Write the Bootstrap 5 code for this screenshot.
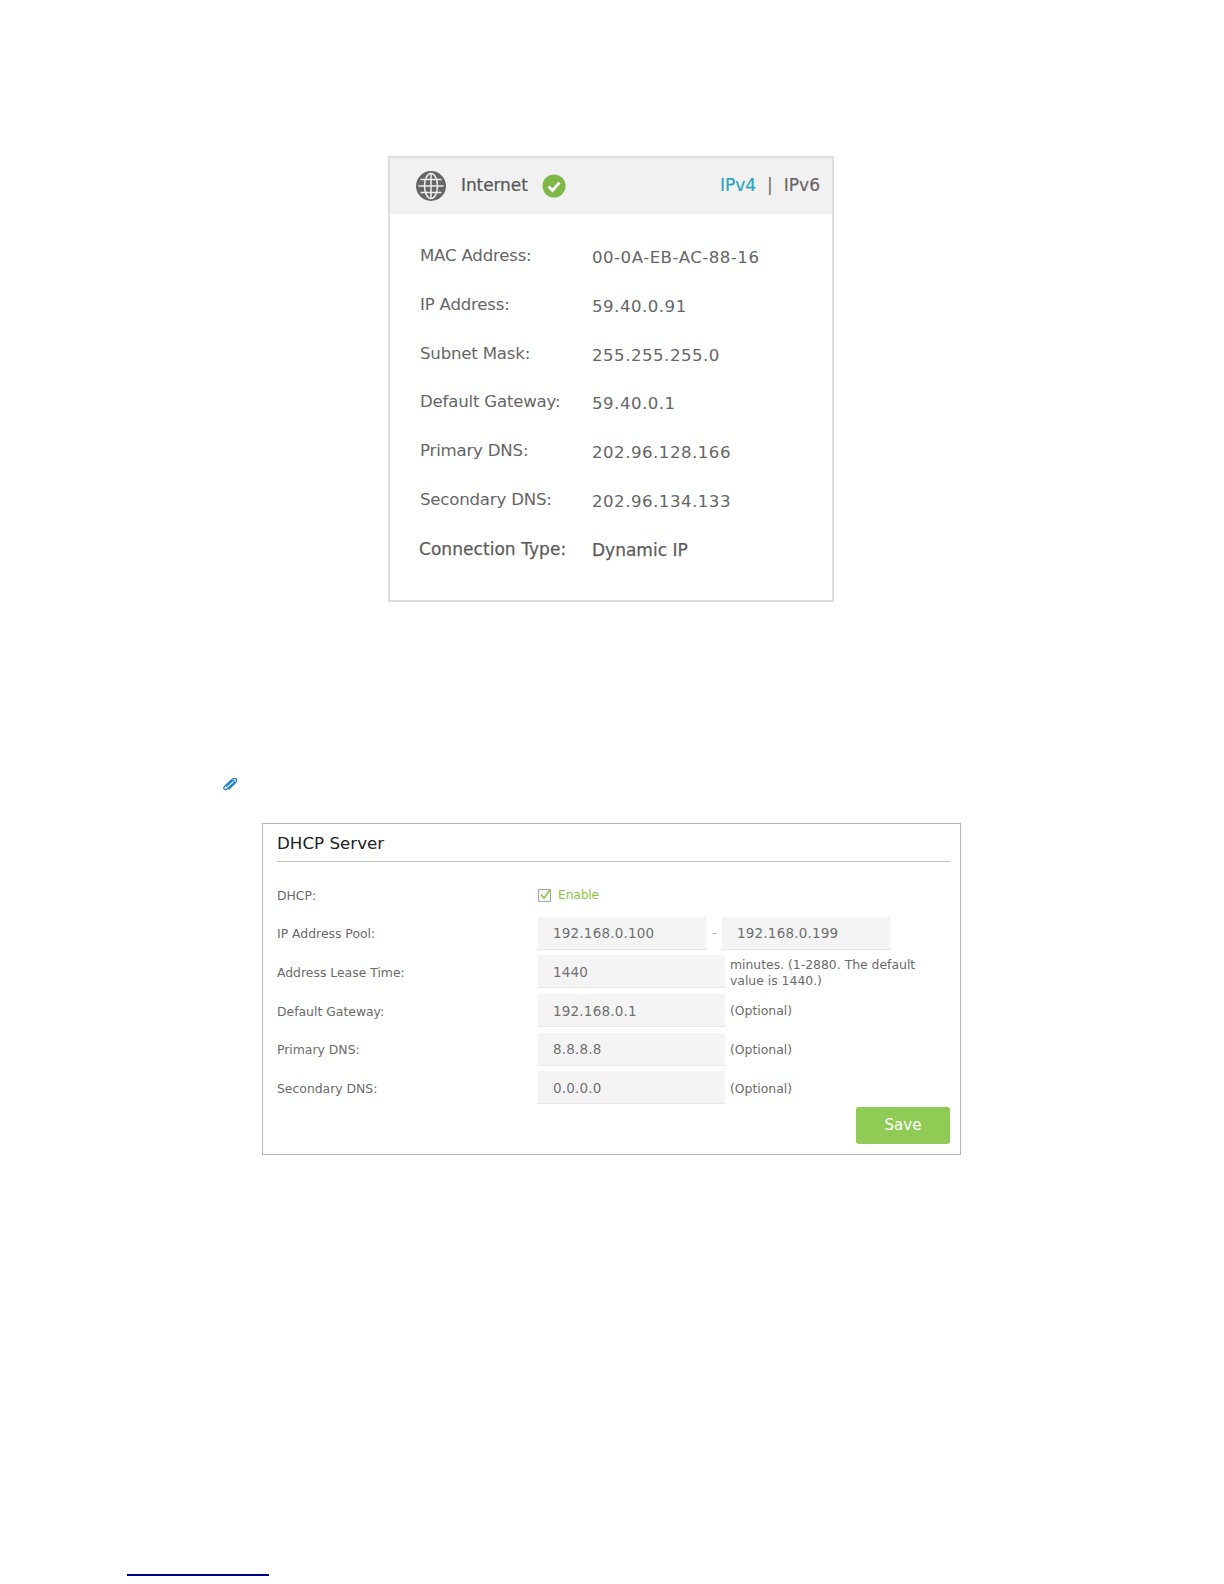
<!DOCTYPE html>
<html lang="en">
<head>
<meta charset="utf-8">
<title>Internet and DHCP Server</title>
<link rel="stylesheet" href="https://cdn.jsdelivr.net/npm/bootstrap@5.3.0/dist/css/bootstrap.min.css">
<style>
html,body{background:#fff}
body{font-family:"DejaVu Sans",sans-serif;color:#666;height:1584px;overflow:hidden;padding-top:156px}
.inet-card{width:446px;height:446px;margin-left:388px;border:2px solid #dcdcdc}
.inet-head{height:56px;background:#f1f1f1;padding:0 12px 0 25px;font-size:17px}
.inet-head .nm{margin-left:14px;margin-right:14px;color:#555;letter-spacing:-.1px;-webkit-text-stroke:.2px #555}
.inet-head .proto,.inet-head .lnk{-webkit-text-stroke:.2px currentColor}
.proto{color:#29a5c4}
.sep{margin:0 11px}
.inet-body{padding-top:20px;padding-left:30px;font-size:16.6px}
.inet-row{height:48.8px}
.inet-lab{width:172px;padding-bottom:4px;letter-spacing:-.2px}
.inet-val{letter-spacing:.5px}
.inet-strong{color:#5c5c5c;-webkit-text-stroke:.25px #5c5c5c;font-size:17px}
.inet-strong .inet-lab{padding-bottom:2px;letter-spacing:.05px;margin-left:-1px;width:173px}
.clip-row{margin-left:222px;margin-top:176px;height:14px;line-height:0}
.dhcp-card{width:699px;height:332px;margin-left:262px;margin-top:31px;border:1px solid #b5b5b5;padding:0 10px 0 14px}
.dhcp-title{height:38px;border-bottom:1px solid #c4c4c4;font-size:16.7px;color:#222;padding-top:8px;line-height:22px}
.dhcp-rows{font-size:12.4px;padding-top:13px}
.d-row{height:38.7px}
.d-lab{width:261px;color:#6a6a6a;padding-top:3px}
.fld{background:#f4f4f4;border-bottom:1px solid #e6e6e6;height:33px;padding:2px 0 0 15px;font-size:13.5px;letter-spacing:.2px;color:#707070}
.fld-s{width:169px}
.fld-l{width:187px}
.dash{width:15px;text-align:center;color:#aaa}
.hint{margin-left:5px;line-height:16px;color:#6a6a6a;width:200px;padding-top:2px}
.en{color:#8cc63f;margin-left:6px;letter-spacing:-.2px}
.chk{margin-top:2px}
.save-btn{width:94px;height:37px;background:#8fcb55;color:#fff;border:0;border-radius:3px;font-size:15px;padding:0;margin-right:0}
.save-btn:hover{background:#8fcb55;color:#fff}
.foot-rule{width:142px;height:1px;border-top:2px solid #00008b;margin-left:127px;margin-top:419px}
</style>
</head>
<body>
<section class="inet-card bg-white">
  <div class="inet-head d-flex align-items-center">
    <svg width="32" height="32" viewBox="0 0 32 32" aria-hidden="true"><circle cx="16" cy="16" r="15" fill="#666"/><g fill="none" stroke="#eee" stroke-width="1.5"><ellipse cx="16" cy="16" rx="6.5" ry="12.5"/><path d="M16 3v26M3.5 16h25M5.500 9.500h21M5.500 22.500h21"/></g></svg>
    <span class="nm">Internet</span>
    <svg width="24" height="24" viewBox="0 0 24 24" aria-hidden="true"><circle cx="12" cy="12" r="11.500" fill="#7fb848"/><path d="M6.500 12.500l4 4 7-8" fill="none" stroke="#fff" stroke-width="2.800"/></svg>
    <span class="ms-auto proto">IPv4</span><span class="sep">|</span><span class="lnk">IPv6</span>
  </div>
  <div class="inet-body">
    <div class="inet-row d-flex align-items-center"><span class="inet-lab">MAC Address:</span><span class="inet-val">00-0A-EB-AC-88-16</span></div>
    <div class="inet-row d-flex align-items-center"><span class="inet-lab">IP Address:</span><span class="inet-val">59.40.0.91</span></div>
    <div class="inet-row d-flex align-items-center"><span class="inet-lab">Subnet Mask:</span><span class="inet-val">255.255.255.0</span></div>
    <div class="inet-row d-flex align-items-center"><span class="inet-lab">Default Gateway:</span><span class="inet-val">59.40.0.1</span></div>
    <div class="inet-row d-flex align-items-center"><span class="inet-lab">Primary DNS:</span><span class="inet-val">202.96.128.166</span></div>
    <div class="inet-row d-flex align-items-center"><span class="inet-lab">Secondary DNS:</span><span class="inet-val">202.96.134.133</span></div>
    <div class="inet-row inet-strong d-flex align-items-center"><span class="inet-lab">Connection Type:</span><span>Dynamic IP</span></div>
  </div>
</section>
<div class="clip-row">
  <svg width="16" height="14" viewBox="0 0 16 14" aria-hidden="true"><path d="M4.500 8.500 10 3.300c.8-.7 1.700-.8 2.100-.3.4.5.200 1.300-.6 2.100L5.800 10.500c-1.300 1.200-2.800 1.500-3.600.7-.8-.8-.4-2.300.9-3.500L9.700 1.700c1.500-1.300 3.400-1.600 4.300-.7.900 1 .4 2.800-1.100 4.200L7 11" fill="none" stroke="#1a7cc4" stroke-width="1.200" stroke-linecap="round"/></svg>
</div>
<section class="dhcp-card bg-white">
  <div class="dhcp-title">DHCP Server</div>
  <div class="dhcp-rows">
    <div class="d-row d-flex align-items-center"><span class="d-lab">DHCP:</span>
      <svg class="chk" width="14" height="14" viewBox="0 0 14 14" aria-hidden="true"><rect x=".5" y="1.500" width="12" height="12" fill="#f4f4f4" stroke="#aaa"/><path d="M3 6.500l3 3.500 6.500-9" fill="none" stroke="#8cc63f" stroke-width="1.500"/></svg>
      <span class="en chk">Enable</span></div>
    <div class="d-row d-flex align-items-center"><span class="d-lab">IP Address Pool:</span><div class="fld fld-s d-flex align-items-center">192.168.0.100</div><span class="dash">-</span><div class="fld fld-s d-flex align-items-center">192.168.0.199</div></div>
    <div class="d-row d-flex align-items-center"><span class="d-lab">Address Lease Time:</span><div class="fld fld-l d-flex align-items-center">1440</div><span class="hint">minutes. (1-2880. The default value is 1440.)</span></div>
    <div class="d-row d-flex align-items-center"><span class="d-lab">Default Gateway:</span><div class="fld fld-l d-flex align-items-center">192.168.0.1</div><span class="hint">(Optional)</span></div>
    <div class="d-row d-flex align-items-center"><span class="d-lab">Primary DNS:</span><div class="fld fld-l d-flex align-items-center">8.8.8.8</div><span class="hint">(Optional)</span></div>
    <div class="d-row d-flex align-items-center"><span class="d-lab">Secondary DNS:</span><div class="fld fld-l d-flex align-items-center">0.0.0.0</div><span class="hint">(Optional)</span></div>
    <div class="d-flex justify-content-end"><button type="button" class="btn save-btn">Save</button></div>
  </div>
</section>
<div class="foot-rule"></div>
<script src="https://cdn.jsdelivr.net/npm/bootstrap@5.3.0/dist/js/bootstrap.bundle.min.js"></script>
</body>
</html>
